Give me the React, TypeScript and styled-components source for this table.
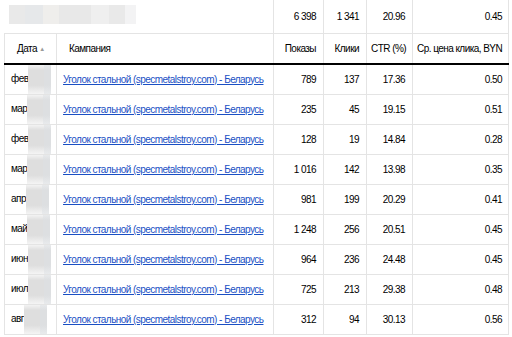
import React from 'react';
import styled, { createGlobalStyle } from 'styled-components';

const GlobalStyle = createGlobalStyle`
  body {
    margin: 0;
    background: #fff;
    font-family: "Liberation Sans", Arial, sans-serif;
    color: #000;
  }
`;

const CAMPAIGN = 'Уголок стальной (specmetalstroy.com) - Беларусь';

const rows = [
  { month: 'фев', shows: '789', clicks: '137', ctr: '17.36', price: '0.50' },
  { month: 'мар', shows: '235', clicks: '45', ctr: '19.15', price: '0.51' },
  { month: 'фев', shows: '128', clicks: '19', ctr: '14.84', price: '0.28' },
  { month: 'мар', shows: '1\u00a0016', clicks: '142', ctr: '13.98', price: '0.35' },
  { month: 'апр', shows: '981', clicks: '199', ctr: '20.29', price: '0.41' },
  { month: 'май', shows: '1\u00a0248', clicks: '256', ctr: '20.51', price: '0.45' },
  { month: 'июн', shows: '964', clicks: '236', ctr: '24.48', price: '0.45' },
  { month: 'июл', shows: '725', clicks: '213', ctr: '29.38', price: '0.48' },
  { month: 'авг', shows: '312', clicks: '94', ctr: '30.13', price: '0.56' },
];

//
// MAIN COMPONENT
//
const App = () => {
  return (
    <Page>
      <GlobalStyle />
      <Table>
        <colgroup>
          <col style={{ width: 52 }} />
          <col style={{ width: 217 }} />
          <col style={{ width: 50 }} />
          <col style={{ width: 43 }} />
          <col style={{ width: 46 }} />
          <col style={{ width: 96 }} />
        </colgroup>
        <thead>
          <SummaryRow>
            <SummaryLabel colSpan={2}>
              <BlurBar />
            </SummaryLabel>
            <SummaryCell>6&nbsp;398</SummaryCell>
            <SummaryCell>1&nbsp;341</SummaryCell>
            <SummaryCell>20.96</SummaryCell>
            <SummaryCell $last>0.45</SummaryCell>
          </SummaryRow>
          <tr>
            <HeadCell>
              Дата <SortArrow>▲</SortArrow>
            </HeadCell>
            <HeadCell>Кампания</HeadCell>
            <HeadCell $num>Показы</HeadCell>
            <HeadCell $num>Клики</HeadCell>
            <HeadCell $num>CTR (%)</HeadCell>
            <HeadCell $num $last>Ср. цена клика, BYN</HeadCell>
          </tr>
        </thead>
        <tbody>
          {rows.map((r, i) => (
            <tr key={i}>
              <Cell>
                {r.month}
                <DateBlur />
              </Cell>
              <Cell>
                <CampaignLink href="#">{CAMPAIGN}</CampaignLink>
              </Cell>
              <Cell $num>{r.shows}</Cell>
              <Cell $num>{r.clicks}</Cell>
              <Cell $num>{r.ctr}</Cell>
              <Cell $num $last>{r.price}</Cell>
            </tr>
          ))}
        </tbody>
      </Table>
    </Page>
  );
};

export default App;

//
// STYLED COMPONENTS
//
const Page = styled.div`
  padding: 0 4px;
  width: 504px;
`;

const Table = styled.table`
  border-collapse: collapse;
  table-layout: fixed;
  width: 504px;
  font-size: 10px;
  letter-spacing: -0.55px;
`;

const SummaryRow = styled.tr`
  height: 33px;
`;

const SummaryLabel = styled.td`
  padding: 0 0 0 4px;
  border-bottom: 1px solid #e4e4e4;
  vertical-align: middle;
`;

const BlurBar = styled.div`
  width: 127px;
  height: 19px;
  margin-top: -4px;
  background: linear-gradient(
    to right,
    #e9e9e9 0,
    #e9e9e9 16px,
    #e6e8ea 16px,
    #e6e8ea 34px,
    #efeeec 34px,
    #efeeec 50px,
    #e8e8e8 50px,
    #e8e8e8 82px,
    #efefef 82px,
    #efefef 100px,
    #e9e9e9 100px,
    #e9e9e9 116px,
    #f3f3f4 116px
  );
`;

const SummaryCell = styled.td<{ $last?: boolean }>`
  text-align: right;
  padding: 0 ${p => (p.$last ? '6px' : '7px')} 0 4px;
  border-left: 1px solid #e4e4e4;
  border-right: 1px solid #e4e4e4;
  border-bottom: 1px solid #e4e4e4;
  white-space: nowrap;
`;

const HeadCell = styled.th<{ $num?: boolean; $last?: boolean }>`
  height: 29px;
  padding: 0 ${p => (p.$last ? '6px' : p.$num ? '7px' : '4px')} 0
    ${p => (p.$num ? '4px' : '12px')};
  text-align: ${p => (p.$num ? 'right' : 'left')};
  font-weight: normal;
  white-space: nowrap;
  border-left: 1px solid #e4e4e4;
  border-right: 1px solid #e4e4e4;
  border-bottom: 2px solid #000;
`;

const SortArrow = styled.span`
  font-size: 6px;
  color: #9a9a9a;
  vertical-align: 1px;
`;

const Cell = styled.td<{ $num?: boolean; $last?: boolean }>`
  height: 29px;
  padding: 0 ${p => (p.$last ? '6px' : p.$num ? '7px' : '4px')} 0 6px;
  text-align: ${p => (p.$num ? 'right' : 'left')};
  white-space: nowrap;
  overflow: hidden;
  border: 1px solid #e4e4e4;
`;

const DateBlur = styled.span`
  display: inline-block;
  width: 23px;
  height: 29px;
  vertical-align: middle;
  background: linear-gradient(
      to right,
      transparent 0,
      transparent 16px,
      rgba(220, 224, 228, 0.5) 16px
    ),
    linear-gradient(to bottom, #f3f3f3 0, #dedede 18%, #dedede 70%, #f4f4f4 100%);
`;

const CampaignLink = styled.a`
  color: #1a4fc4;
  text-decoration: underline;
`;
